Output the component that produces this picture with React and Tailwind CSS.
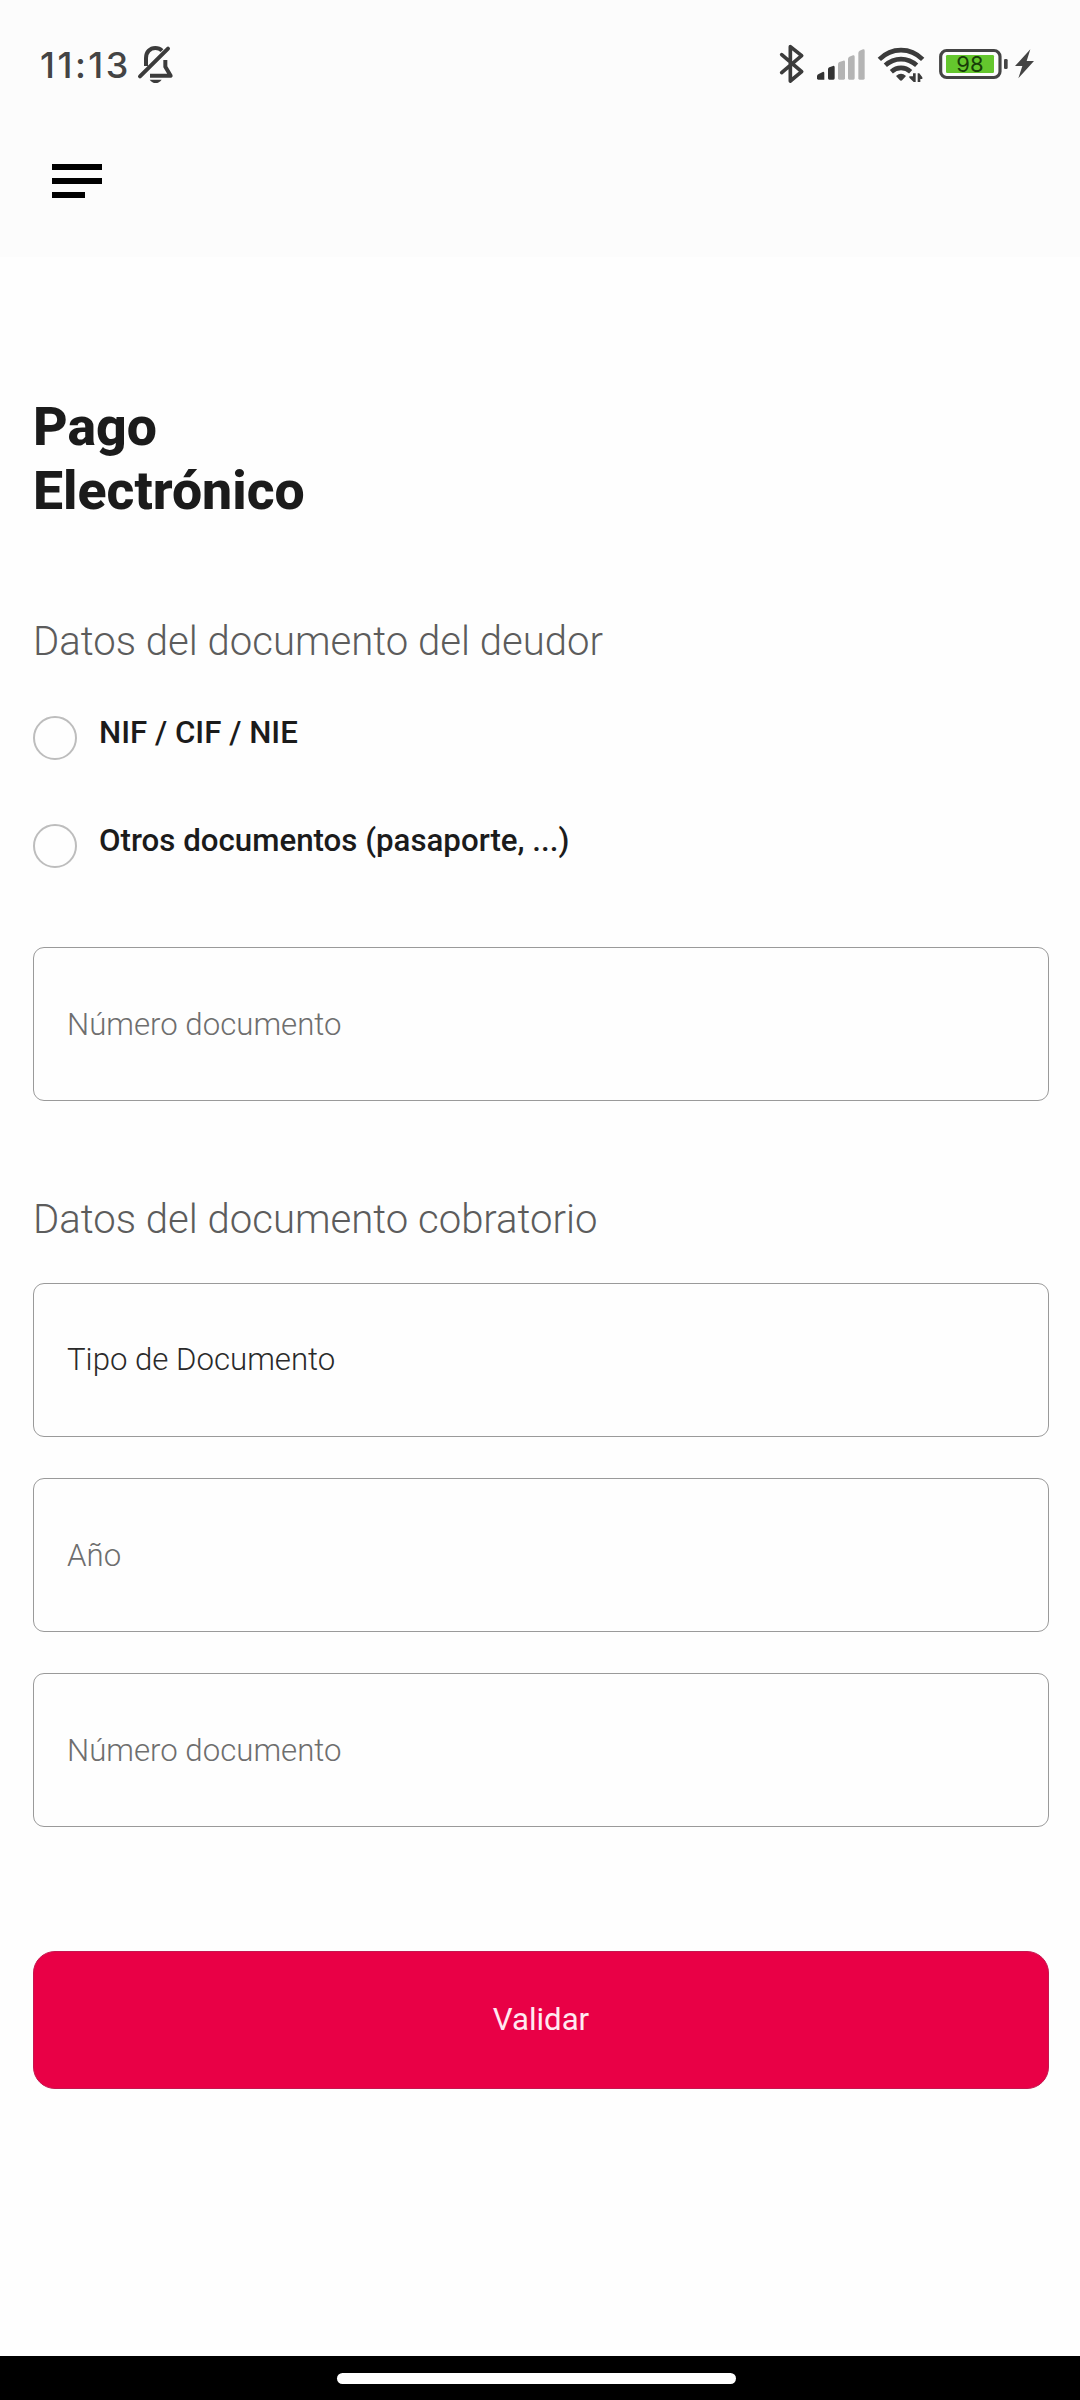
import { useState } from "react";

const BellOffIcon = () => (
  <svg width="37" height="40" viewBox="351 42 111 120" fill="none">
    <path
      d="M378 108V84C378 66 390 54 406 54C415 54 421 57 426 62M436 90V110L452 137H390"
      stroke="#3b3b3b"
      strokeWidth="12"
      strokeLinejoin="round"
    />
    <path d="M360 139L444 56" stroke="#3b3b3b" strokeWidth="12" strokeLinecap="round" />
    <path d="M389 149H425C420 156 414 159 407 159C400 159 394 156 389 149Z" fill="#3b3b3b" />
  </svg>
);

const BluetoothIcon = () => (
  <svg width="26" height="40" viewBox="57 42 78 120" fill="none">
    <path
      d="M65 74L125 125L91 153V50L125 77L65 128"
      stroke="#3b3b3b"
      strokeWidth="11"
      strokeLinecap="round"
      strokeLinejoin="round"
    />
  </svg>
);

const SignalIcon = () => (
  <svg width="50" height="40" viewBox="168 42 150 120">
    <path d="M171 138Q172 134 176 132L188 126Q193 124 193 130V149H175Q171 149 171 145Z" fill="#333" />
    <path d="M204 118Q204 114 208 112L219 108Q224 106 224 112V145Q224 149 220 149H208Q204 149 204 145Z" fill="#333" />
    <path d="M234 103Q234 98 238 96L250 92Q255 91 255 96V145Q255 149 251 149H238Q234 149 234 145Z" fill="#b4b4b4" />
    <path d="M264 87Q264 82 268 80L279 76Q284 74 284 80V145Q284 149 280 149H268Q264 149 264 145Z" fill="#b4b4b4" />
    <path d="M295 69Q295 64 299 62L309 58Q314 57 314 62V145Q314 149 310 149H299Q295 149 295 145Z" fill="#b4b4b4" />
  </svg>
);

const WifiIcon = () => (
  <svg width="48" height="40" viewBox="351 42 144 120" fill="none">
    <g stroke="#3b3b3b" strokeWidth="14">
      <path d="M358 88C395 51 451 51 488 88" />
      <path d="M376 106C403 81 443 81 470 106" />
      <path d="M394 125C411 110 435 110 452 125" />
    </g>
    <path d="M408 138Q423 125 438 138L427 150Q423 154 419 150Z" fill="#3b3b3b" />
    <path d="M459 130H467V156H461L448 143V139H459ZM473 156H481V147H487V142L478 130H473Z" fill="#3b3b3b" />
  </svg>
);

const BatteryIcon = () => (
  <svg width="71" height="40" viewBox="114 42 213 120">
    <rect x="122" y="61.5" width="178" height="81" rx="18" fill="none" stroke="#444" strokeWidth="9.5" />
    <rect x="138" y="75" width="144" height="54" rx="4" fill="#64c62d" />
    <rect x="312" y="87" width="11" height="30" rx="4" fill="#444" />
    <text x="210" y="127" textAnchor="middle" fontSize="66" fill="#173d08" className="font-['Inter']">
      98
    </text>
  </svg>
);

const BoltIcon = () => (
  <svg width="21" height="40" viewBox="342 42 63 120">
    <path d="M391 58L345 108H367L355 145L402 93H380Z" fill="#444" />
  </svg>
);

const StatusBar = () => (
  <div className="flex h-32 items-center justify-between pl-10 pr-[45px]">
    <div className="flex items-center">
      <span className="w-[97px] whitespace-nowrap pt-0.5 font-['Inter',sans-serif] text-[36px] font-medium leading-none tracking-[2.5px] text-[#444]">
        11:13
      </span>
      <BellOffIcon />
    </div>
    <div className="flex items-center">
      <div className="flex items-center gap-[11px]">
        <BluetoothIcon />
        <SignalIcon />
        <WifiIcon />
      </div>
      <div className="ml-[13px] flex items-center gap-[5px]">
        <BatteryIcon />
        <BoltIcon />
      </div>
    </div>
  </div>
);

const RadioOption = ({ label, checked, onSelect }) => (
  <button onClick={onSelect} className="flex h-11 items-start text-left">
    <span className="flex size-11 items-center justify-center rounded-full border-2 border-[#bdbdbd]">
      {checked && <span className="size-6 rounded-full bg-[#e90046]" />}
    </span>
    <span className="ml-[22px] text-[31.25px] font-medium leading-[34px] text-[#1b1b1b]">{label}</span>
  </button>
);

const Field = ({ placeholder, dark }) => (
  <div className="h-[154px] w-full">
    <input
      placeholder={placeholder}
      className={
        "size-full rounded-[11px] border border-[#9a9a9a] bg-transparent px-[33px] text-[31.2px] font-light outline-none " +
        (dark ? "pb-[2px] placeholder:text-[#2a2a2a]" : "placeholder:text-[#6e6e6e]")
      }
    />
  </div>
);

export default function App() {
  const [docType, setDocType] = useState(null);

  return (
    <div className="flex h-[2400px] w-[1080px] flex-col bg-[#fefefe] font-['Roboto',sans-serif]">
      <header className="h-[257px] bg-[#fcfcfc]">
        <StatusBar />
        <button className="ml-[52px] mt-9 flex flex-col gap-2">
          <span className="h-[6px] w-[50px] bg-black" />
          <span className="h-[6px] w-[50px] bg-black" />
          <span className="h-[6px] w-[33px] bg-black" />
        </button>
      </header>

      <main className="flex grow flex-col pl-[33px] pr-[31px] pt-[138px]">
        <h1 className="text-[53.6px] font-extrabold leading-[64px] text-[#1b1b1b]">
          Pago
          <br />
          Electrónico
        </h1>

        <h2 className="mt-[95px] text-[40.1px] font-light leading-[48px] text-[#5c5c5c]">
          Datos del documento del deudor
        </h2>
        <div className="mt-[50px] flex flex-col gap-16">
          <RadioOption
            label="NIF / CIF / NIE"
            checked={docType === "nif"}
            onSelect={() => setDocType("nif")}
          />
          <RadioOption
            label="Otros documentos (pasaporte, ...)"
            checked={docType === "otros"}
            onSelect={() => setDocType("otros")}
          />
        </div>
        <div className="mt-[79px]">
          <Field placeholder="Número documento" />
        </div>

        <h2 className="mt-[95px] text-[40.1px] font-light leading-[48px] text-[#5c5c5c]">
          Datos del documento cobratorio
        </h2>
        <div className="mt-[39px] flex flex-col gap-[41px]">
          <Field placeholder="Tipo de Documento" dark />
          <Field placeholder="Año" />
          <Field placeholder="Número documento" />
        </div>

        <button className="mt-[124px] h-[138px] rounded-[22px] border border-[#c4174f] bg-[#e90046] text-[31.2px] text-[#ffe9f1]">
          Validar
        </button>
      </main>

      <footer className="flex h-11 bg-black pl-[337px] pt-[17px]">
        <div className="h-[11px] w-[399px] rounded-full bg-white" />
      </footer>
    </div>
  );
}
